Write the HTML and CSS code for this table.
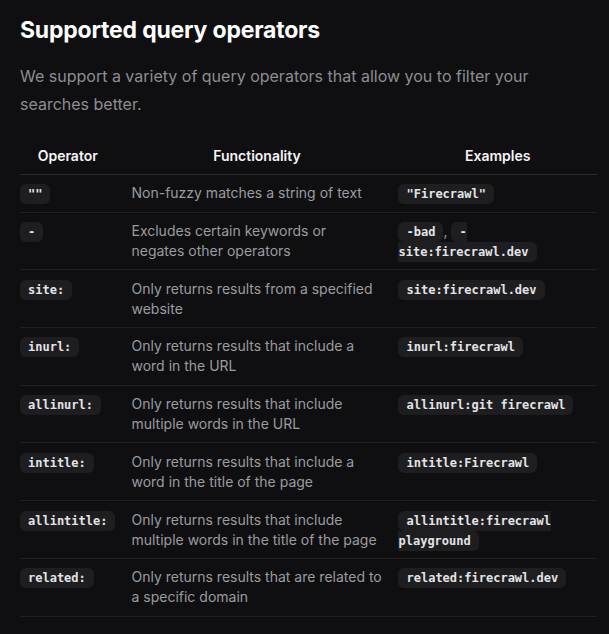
FILE: index.html
```html
<!DOCTYPE html>
<html lang="en">
<head>
<meta charset="utf-8">
<title>Supported query operators</title>
<link rel="stylesheet" href="styles.css">
</head>
<body>
<main class="doc">
  <h2 class="title">Supported query operators</h2>
  <p class="lead">We support a variety of query operators that allow you to filter your searches better.</p>
  <table class="ops">
    <thead>
      <tr><th>Operator</th><th>Functionality</th><th>Examples</th></tr>
    </thead>
    <tbody>
      <tr><td><code>""</code></td><td>Non-fuzzy matches a string of text</td><td><code>"Firecrawl"</code></td></tr>
      <tr><td><code>-</code></td><td>Excludes certain keywords or negates other operators</td><td><code>-bad</code>, <code>-site:firecrawl.dev</code></td></tr>
      <tr><td><code>site:</code></td><td>Only returns results from a specified website</td><td><code>site:firecrawl.dev</code></td></tr>
      <tr><td><code>inurl:</code></td><td>Only returns results that include a word in the URL</td><td><code>inurl:firecrawl</code></td></tr>
      <tr><td><code>allinurl:</code></td><td>Only returns results that include multiple words in the URL</td><td><code>allinurl:git firecrawl</code></td></tr>
      <tr><td><code>intitle:</code></td><td>Only returns results that include a word in the title of the page</td><td><code>intitle:Firecrawl</code></td></tr>
      <tr><td><code>allintitle:</code></td><td>Only returns results that include multiple words in the title of the page</td><td><code>allintitle:firecrawl playground</code></td></tr>
      <tr><td><code>related:</code></td><td>Only returns results that are related to a specific domain</td><td><code>related:firecrawl.dev</code></td></tr>
    </tbody>
  </table>
</main>
</body>
</html>
```

FILE: styles.css
```css
html, body {
  margin: 0;
  padding: 0;
  background: #0f0f11;
}
body {
  font-family: Inter, "Noto Sans", sans-serif;
  color: #e8e8ea;
}
.doc {
  padding: 16px 12px 0 20px;
}
.title {
  margin: 0;
  font-size: 23px;
  line-height: 28px;
  font-weight: 700;
  color: #ffffff;
  letter-spacing: -0.2px;
}
.lead {
  margin: 18px 0 0;
  font-size: 16px;
  line-height: 28px;
  color: #8d8d92;
  max-width: 520px;
}
.ops {
  margin-top: 20px;
  width: 577px;
  border-collapse: collapse;
  font-size: 14px;
  line-height: 20px;
}
.ops th {
  font-weight: 600;
  color: #f4f4f5;
  text-align: center;
  padding: 8px 8px 8px;
  border-bottom: 1px solid #2a2a2e;
}
.ops td {
  vertical-align: top;
  padding: 8.4px 8px 8.3px;
  color: #9b9ba0;
  border-bottom: 1px solid #202023;
}
.ops th:first-child, .ops td:first-child {
  padding-left: 0;
  width: 95px;
}
.ops th:nth-child(2), .ops td:nth-child(2) {
  width: 251px;
}
.ops th:last-child, .ops td:last-child {
  padding-right: 0;
}
.ops code {
  font-family: "DejaVu Sans Mono", "Liberation Mono", monospace;
  font-size: 12px;
  line-height: 14px;
  font-weight: 700;
  color: #e4e4e7;
  background: #1e1e21;
  border-radius: 6px;
  padding: 3px 8px;
}
```
